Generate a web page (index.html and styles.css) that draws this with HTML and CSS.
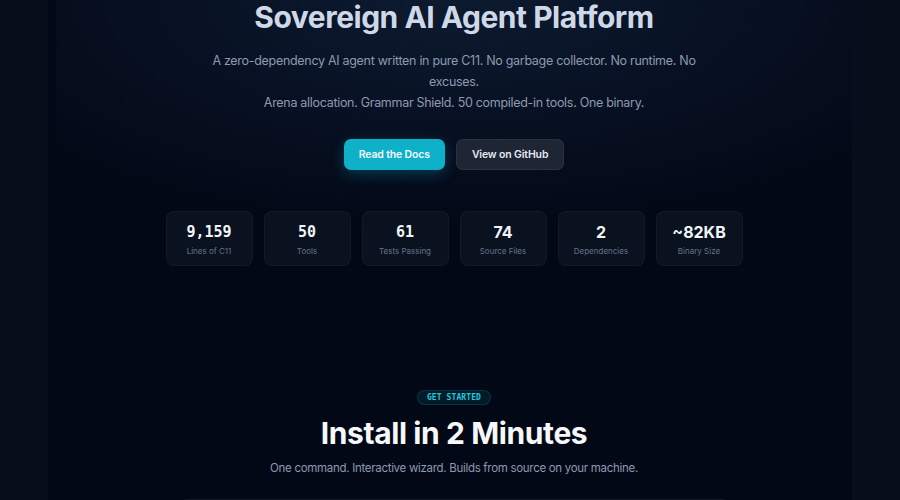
FILE: index.html
```html
<!DOCTYPE html>
<html lang="en">
<head>
  <meta charset="UTF-8">
  <title>Sovereign AI Agent Platform</title>
  <link rel="stylesheet" href="styles.css">
</head>
<body>
  <div class="page">
    <section class="hero">
      <h1 class="hero-title">Sovereign AI Agent Platform</h1>
      <p class="hero-lead">
        A zero-dependency AI agent written in pure C11. No garbage collector. No runtime. No excuses.<br>
        Arena allocation. Grammar Shield. 50 compiled-in tools. One binary.
      </p>
      <div class="hero-actions">
        <a class="btn btn-primary" href="#">Read the Docs</a>
        <a class="btn btn-ghost" href="#">View on GitHub</a>
      </div>

      <div class="stats">
        <div class="stat">
          <div class="stat-num mono">9,159</div>
          <div class="stat-label">Lines of C11</div>
        </div>
        <div class="stat">
          <div class="stat-num mono">50</div>
          <div class="stat-label">Tools</div>
        </div>
        <div class="stat">
          <div class="stat-num mono">61</div>
          <div class="stat-label">Tests Passing</div>
        </div>
        <div class="stat">
          <div class="stat-num">74</div>
          <div class="stat-label">Source Files</div>
        </div>
        <div class="stat">
          <div class="stat-num">2</div>
          <div class="stat-label">Dependencies</div>
        </div>
        <div class="stat">
          <div class="stat-num">~82KB</div>
          <div class="stat-label">Binary Size</div>
        </div>
      </div>
    </section>

    <section class="install">
      <span class="badge">GET STARTED</span>
      <h2 class="install-title">Install in 2 Minutes</h2>
      <p class="install-lead">One command. Interactive wizard. Builds from source on your machine.</p>
      <div class="terminal"></div>
    </section>
  </div>
</body>
</html>
```

FILE: styles.css
```css
body {
  margin: 0;
  background: #070d1b;
  font-family: Inter, 'Noto Sans', sans-serif;
  overflow: hidden;
}

.page {
  max-width: 804px;
  margin: 0 auto;
  min-height: 500px;
  background: #030816;
  padding-left: 8px;
  box-sizing: border-box;
}

.hero {
  text-align: center;
  background: radial-gradient(ellipse 70% 60% at 50% 0%, rgba(20, 42, 70, 0.55), rgba(3, 8, 22, 0) 100%);
  padding-bottom: 118px;
}

.hero-title {
  margin: 0;
  font-size: 30px;
  line-height: 34px;
  font-weight: 700;
  letter-spacing: -0.5px;
  color: #cfd8e6;
}

.hero-lead {
  margin: 16px auto 0;
  max-width: 500px;
  font-size: 12.5px;
  line-height: 21px;
  letter-spacing: -0.3px;
  color: #8d9ab0;
}

.hero-actions {
  display: flex;
  justify-content: center;
  gap: 11px;
  margin-top: 26px;
}

.btn {
  display: inline-block;
  height: 31px;
  line-height: 31px;
  padding: 0 15px;
  border-radius: 7px;
  font-size: 10.5px;
  font-weight: 600;
  letter-spacing: -0.15px;
  text-decoration: none;
  box-sizing: border-box;
}

.btn-primary {
  background: #0fb1c9;
  color: #f4fbfd;
  box-shadow: 0 4px 14px rgba(6, 182, 212, 0.28);
}

.btn-ghost {
  background: #1e2534;
  color: #e5e9f0;
  border: 1px solid rgba(255, 255, 255, 0.06);
  line-height: 29px;
}

.stats {
  display: flex;
  justify-content: center;
  gap: 11px;
  margin-top: 41px;
}

.stat {
  width: 87px;
  height: 55px;
  box-sizing: border-box;
  padding-top: 11px;
  background: #0a111f;
  border: 1px solid rgba(255, 255, 255, 0.04);
  border-radius: 8px;
}

.stat-num {
  font-size: 16px;
  line-height: 18px;
  font-weight: 700;
  color: #f1f4f8;
}

.stat-num.mono {
  font-family: 'DejaVu Sans Mono', monospace;
  font-size: 15px;
}

.stat-label {
  margin-top: 5px;
  font-size: 8px;
  color: #64748b;
}

.install {
  text-align: center;
}

.badge {
  display: inline-block;
  padding: 0 9px;
  height: 15px;
  line-height: 14px;
  box-sizing: border-box;
  border-radius: 8px;
  font-family: 'DejaVu Sans Mono', monospace;
  font-size: 8px;
  font-weight: 700;
  letter-spacing: 0.1px;
  color: #22c7de;
  background: rgba(6, 182, 212, 0.1);
  border: 1px solid rgba(6, 182, 212, 0.18);
}

.install-title {
  margin: 10px 0 0;
  font-size: 30px;
  line-height: 36px;
  font-weight: 700;
  letter-spacing: -0.4px;
  color: #f6f8fb;
}

.install-lead {
  margin: 8px 0 0;
  font-size: 11.5px;
  line-height: 18px;
  letter-spacing: -0.3px;
  color: #8d9ab0;
}

.terminal {
  width: 551px;
  height: 40px;
  margin: 22px auto 0;
  background: #0a111f;
  border: 1px solid rgba(255, 255, 255, 0.04);
  border-radius: 10px;
}
```
